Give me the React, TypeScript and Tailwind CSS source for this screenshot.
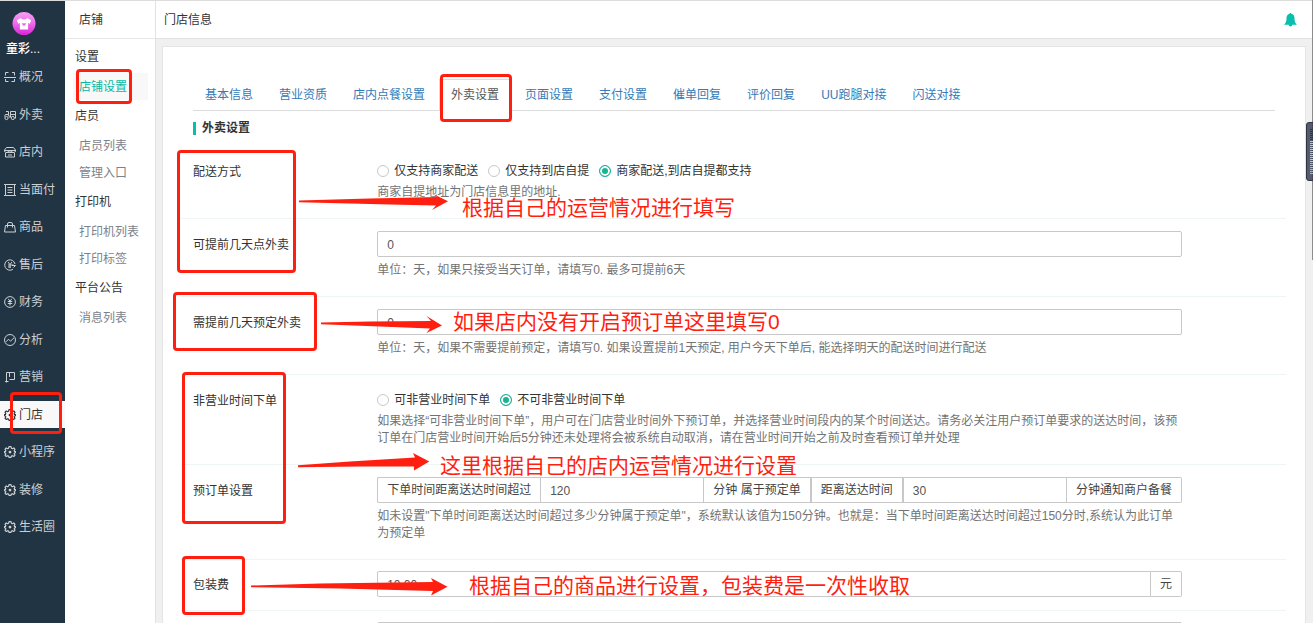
import type { ReactNode } from "react";

const stroke = {
  width: 12,
  height: 12,
  viewBox: "0 0 12 12",
  fill: "none",
  stroke: "currentColor",
  strokeWidth: 1,
  "aria-hidden": true,
} as const;

function Gear() {
  return (
    <svg {...stroke} strokeWidth={1.2}>
      <path
        strokeLinejoin="round"
        d="M5 .7h2l.4 1.500 1 .5 1.400-.8 1.200 1.400-.8 1.300.3.9 1 .2v1l-1 .3-.3.9.8 1.300L9.700 10.500l-1.300-.8-1 .4L7 11.400H5l-.4-1.300-1-.4-1.300.8L1 9.200l.8-1.300-.3-.9-1-.3v-1l1-.2.3-.9L1 3.300l1.200-1.400 1.400.8 1-.5z"
      />
      <circle cx="6" cy="6.100" r="1.400" fill="currentColor" stroke="none" />
    </svg>
  );
}

function Frame() {
  return (
    <svg {...stroke}>
      <path d="M4.500 1.500h-3v3M8 1.500h2.500v3M4.500 10.500h-3v-2.500M7.500 10.500h3v-2.500M0 6.500h12" />
    </svg>
  );
}

function Scooter() {
  return (
    <svg {...stroke}>
      <path d="M2 2.500h2.500v4M.5 7.500l1-2h3l1 3M6.500 8.500v-6h5v7M6.500 5.500h5" />
      <circle cx="2.500" cy="9" r="1.600" />
      <circle cx="8.800" cy="9" r="1.600" />
    </svg>
  );
}

function Store() {
  return (
    <svg {...stroke}>
      <path d="M2.500 1.500h7l2 2.500v1.500l-1.500 1h-8l-1.500-1V4zM.5 4.500h11M1.500 7v4h9V7M3.500 6.500l1-1.500 1.500 1.500 1.500-1.500 1 1.500M4 9h4" />
    </svg>
  );
}

function Bill() {
  return (
    <svg {...stroke}>
      <path d="M1.500.5h9v11h-9zM3.500 3.500h5M3.500 6h5M3.500 8.500h5M0 .5h1.500M0 11.500h1.500M10.500 .5H12M10.500 11.500H12" />
    </svg>
  );
}

function Bag() {
  return (
    <svg {...stroke}>
      <path d="M1.500 4.500h9l1 6.500H.5zM3.500 6.500V3a1.500 1.500 0 0 1 1.500-1.500h2A1.500 1.500 0 0 1 8.500 3v3.500" />
    </svg>
  );
}

function Service() {
  return (
    <svg {...stroke}>
      <path d="M9 10.200A5.200 5.200 0 1 1 11 5M4 3l2 2.500L8 3M6 5.500V9M4 6h5.500M4 8h3M8 6.500l3.500 0-2 2" />
    </svg>
  );
}

function Yuan() {
  return (
    <svg {...stroke}>
      <circle cx="6" cy="6" r="5.400" />
      <path d="M4.200 2.800L6 5.200l1.800-2.400M6 5v4.500M3.800 5.500h4.400M3.800 7.500h4.400" />
    </svg>
  );
}

function Trend() {
  return (
    <svg {...stroke}>
      <circle cx="6" cy="6" r="5.500" />
      <path d="M2 7.800L4.500 5.200l2 2L10 3.800" />
    </svg>
  );
}

function Flag() {
  return (
    <svg {...stroke}>
      <path d="M2.500 11.500V1.500h8v7h-5M1 10.500h3.500M5.500 1.500v4.500" />
    </svg>
  );
}

const mainMenu: { text: string; icon: ReactNode; active?: boolean }[] = [
  { text: "概况", icon: <Frame /> },
  { text: "外卖", icon: <Scooter /> },
  { text: "店内", icon: <Store /> },
  { text: "当面付", icon: <Bill /> },
  { text: "商品", icon: <Bag /> },
  { text: "售后", icon: <Service /> },
  { text: "财务", icon: <Yuan /> },
  { text: "分析", icon: <Trend /> },
  { text: "营销", icon: <Flag /> },
  { text: "门店", icon: <Gear />, active: true },
  { text: "小程序", icon: <Gear /> },
  { text: "装修", icon: <Gear /> },
  { text: "生活圈", icon: <Gear /> },
];

const subMenu = [
  { title: "设置", items: ["店铺设置"] },
  { title: "店员", items: ["店员列表", "管理入口"] },
  { title: "打印机", items: ["打印机列表", "打印标签"] },
  { title: "平台公告", items: ["消息列表"] },
];

const tabs = [
  "基本信息",
  "营业资质",
  "店内点餐设置",
  "外卖设置",
  "页面设置",
  "支付设置",
  "催单回复",
  "评价回复",
  "UU跑腿对接",
  "闪送对接",
];

function Row({
  label,
  htmlFor,
  divided = true,
  compact = false,
  children,
}: {
  label: string;
  htmlFor?: string;
  divided?: boolean;
  compact?: boolean;
  children: ReactNode;
}) {
  return (
    <div
      className={`grid grid-cols-12 ${divided ? "border-t border-[#eff4f5]" : ""} ${
        compact ? "py-[11px]" : "pt-3 pb-[17px]"
      }`}
    >
      {htmlFor ? (
        <label htmlFor={htmlFor} className="col-span-2 px-3 leading-[28px] whitespace-nowrap">
          {label}
        </label>
      ) : (
        <span className="col-span-2 px-3 leading-[28px] whitespace-nowrap">{label}</span>
      )}
      <div className="col-span-9 px-3">{children}</div>
    </div>
  );
}

function Radios({ name, options, selected }: { name: string; options: string[]; selected: number }) {
  return (
    <div role="radiogroup" aria-label={name} className="flex h-[26px] items-center gap-[10px]">
      {options.map((option, i) => (
        <label key={option} className="flex items-center gap-[5px]">
          <input
            type="radio"
            name={name}
            defaultChecked={i === selected}
            className="size-3 appearance-none rounded-full border border-[#c8c8c8] bg-white checked:border-[#1ab394] checked:bg-[#1ab394] checked:shadow-[inset_0_0_0_2px_#fff]"
          />
          {option}
        </label>
      ))}
    </div>
  );
}

function Help({ children }: { children: ReactNode }) {
  return <p className="leading-[17px] text-[#737373]">{children}</p>;
}

const inputClass = "h-[26px] border border-[#c8c8c8] bg-white px-[9px] pt-[2px] text-[#555] outline-none";
const addonClass =
  "flex h-[26px] shrink-0 items-center border border-[#c8c8c8] px-[9px] text-[#444] whitespace-nowrap";

const boxClass = "absolute rounded-[4px] border-3 border-[#ff1f10]";
const noteClass = "absolute text-[21px] leading-[26px] whitespace-nowrap text-[#ff1f10]";

function Annotations() {
  return (
    <div className="pointer-events-none absolute inset-0 overflow-hidden">
      <div className={`${boxClass} top-[392px] left-[10px] h-[42px] w-[52px]`} />
      <div className={`${boxClass} top-[69px] left-[76px] h-[35px] w-[56px]`} />
      <div className={`${boxClass} top-[74px] left-[440px] h-[48px] w-[72px]`} />
      <div className={`${boxClass} top-[150px] left-[177px] h-[123px] w-[119px]`} />
      <div className={`${boxClass} top-[292px] left-[173px] h-[59px] w-[144px]`} />
      <div className={`${boxClass} top-[372px] left-[182px] h-[152px] w-[104px]`} />
      <div className={`${boxClass} top-[556px] left-[182px] h-[59px] w-[63px]`} />
      <svg className="absolute top-0 left-0" width="480" height="623" fill="#ff1f10" aria-hidden="true">
        <path d="M299 200.500 370 198.500 437 197 432 193.500 448 201.300 432 210 436 205.500 390 204.500 299 202.200z" />
        <path d="M321 322.500 370 321.500 431 321 426.500 316 442 325.500 426.500 333 430 328.500 380 326.500 321 324.300z" />
        <path d="M298 465.300 350 461.500 415 457.500 413 453 429.300 461.500 414 470.500 414 466.500 360 466.500 298 467.200z" />
        <path d="M251 585.500 320 583.500 433 582 431 578 447.500 586.800 431 595.500 433 591 340 588.500 251 587.200z" />
      </svg>
      <p className={`${noteClass} top-[195px] left-[462px]`}>根据自己的运营情况进行填写</p>
      <p className={`${noteClass} top-[309px] left-[453px]`}>如果店内没有开启预订单这里填写0</p>
      <p className={`${noteClass} top-[453px] left-[440px]`}>这里根据自己的店内运营情况进行设置</p>
      <p className={`${noteClass} top-[573px] left-[469px]`}>根据自己的商品进行设置，包装费是一次性收取</p>
    </div>
  );
}

export default function App() {
  return (
    <div
      lang="zh-CN"
      className="relative flex h-screen flex-col overflow-hidden bg-[#f0f0f0] font-['Liberation_Sans','Noto_Sans_CJK_SC',sans-serif] text-xs text-[#333]"
    >
      <div className="flex min-h-0 flex-1 border-t border-[#dcdcdc]">
        <nav aria-label="主菜单" className="w-[65px] shrink-0 bg-[#213443] text-[#cdd0d2]">
          <div className="flex h-[62px] flex-col items-start pt-[11px]">
            <svg className="ml-3" width="24" height="24" viewBox="0 0 24 24" aria-hidden="true">
              <defs>
                <linearGradient id="logo" x1="0" y1="0" x2="0" y2="1">
                  <stop offset="0" stopColor="#f7a0f5" />
                  <stop offset=".5" stopColor="#ee6cea" />
                  <stop offset="1" stopColor="#dd22d8" />
                </linearGradient>
              </defs>
              <circle cx="12" cy="12" r="12" fill="url(#logo)" />
              <path
                d="M8.700 6.200c1.300 2.200 5.300 2.200 6.600 0l4.200 2.300-1.500 3.700-1.700-.6v6.600H7.700v-6.600l-1.700.6-1.500-3.700z"
                fill="#fff"
              />
              <path d="M12 14.800l-1.800-1.800c-.6-1.500 1.200-1.900 1.800-.7.600-1.200 2.400-.8 1.800.7z" fill="#ee6cea" />
            </svg>
            <span className="ml-[6px] leading-[28px] font-medium text-white">童彩...</span>
          </div>
          <ul className="flex h-[477px] flex-col justify-between">
            {mainMenu.map((item) => (
              <li key={item.text}>
                <a
                  href="#"
                  className={`flex h-[27px] items-center gap-[3px] pt-px pl-1 whitespace-nowrap ${
                    item.active ? "bg-[#f8f8f8] text-[#333]" : ""
                  }`}
                >
                  {item.icon}
                  {item.text}
                </a>
              </li>
            ))}
          </ul>
        </nav>

        <nav aria-label="店铺菜单" className="w-[91px] shrink-0 border-r border-[#e2e2e2] bg-white">
          <h2 className="h-[38px] border-b border-[#e8e8e8] pl-[14px] leading-[38px]">店铺</h2>
          <div className="flex flex-col gap-1 pt-[6px] pl-2">
            {subMenu.map((group) => (
              <section key={group.title}>
                <h3 className="mb-1 pl-[2px] leading-6">{group.title}</h3>
                <ul>
                  {group.items.map((item) => (
                    <li key={item}>
                      <a
                        href="#"
                        className={`mr-[7px] flex h-[27px] items-center pl-[6px] whitespace-nowrap ${
                          item === "店铺设置" ? "bg-[#f8f8f8] text-[#07b9a5]" : "text-[#7d828a]"
                        }`}
                      >
                        {item}
                      </a>
                    </li>
                  ))}
                </ul>
              </section>
            ))}
          </div>
        </nav>

        <div className="flex min-w-0 flex-1 flex-col">
          <header className="flex h-[38px] shrink-0 items-center justify-between border-b border-[#e2e2e2] bg-white pr-4 pl-2">
            <h1>门店信息</h1>
            <button type="button" aria-label="通知" className="text-[#08bfae]">
              <svg width="13" height="14" viewBox="0 0 13 14" fill="currentColor" aria-hidden="true">
                <path d="M5.800 0h1.400v.8c2.200.5 3.300 2.200 3.300 4.200 0 3.500.6 5 2.500 6.800H8.300c0 2.300-3.600 2.300-3.600 0H0C1.900 10 2.500 8.500 2.500 5c0-2 1.100-3.700 3.300-4.200z" />
              </svg>
            </button>
          </header>

          <main className="mt-[7px] mr-[7px] ml-[6px] flex-1 border border-[#e5e5e5] bg-white pt-8 pr-[19px] pl-[18px]">
            <nav aria-label="设置分类" className="mr-[11px] ml-3 flex gap-[2px] border-b border-[#ddd]">
              {tabs.map((tab) => (
                <a
                  key={tab}
                  href="#"
                  className={
                    tab === "外卖设置"
                      ? "-mb-px border border-b-0 border-[#ddd] bg-white px-[11px] leading-[30px] text-[#555]"
                      : "border border-b-0 border-transparent px-[11px] leading-[30px] text-[#337ab7]"
                  }
                >
                  {tab}
                </a>
              ))}
            </nav>
            <h2 className="mx-3 mt-[11px] mb-[11px] border-l-3 border-[#07bfae] pl-[6px] leading-[13px] font-bold">
              外卖设置
            </h2>

            <form>
              <Row label="配送方式" divided={false}>
                <Radios
                  name="配送方式"
                  options={["仅支持商家配送", "仅支持到店自提", "商家配送,到店自提都支持"]}
                  selected={2}
                />
                <Help>商家自提地址为门店信息里的地址.</Help>
              </Row>

              <Row label="可提前几天点外卖" htmlFor="advance">
                <input id="advance" defaultValue="0" className={`${inputClass} mb-[5px] block w-full rounded-[2px]`} />
                <Help>单位：天，如果只接受当天订单，请填写0. 最多可提前6天</Help>
              </Row>

              <Row label="需提前几天预定外卖" htmlFor="reserve">
                <input id="reserve" defaultValue="0" className={`${inputClass} mb-[5px] block w-full rounded-[2px]`} />
                <Help>
                  单位：天，如果不需要提前预定，请填写0. 如果设置提前1天预定, 用户今天下单后,
                  能选择明天的配送时间进行配送
                </Help>
              </Row>

              <Row label="非营业时间下单">
                <Radios name="非营业时间下单" options={["可非营业时间下单", "不可非营业时间下单"]} selected={1} />
                <Help>
                  如果选择“可非营业时间下单”，用户可在门店营业时间外下预订单，并选择营业时间段内的某个时间送达。请务必关注用户预订单要求的送达时间，该预订单在门店营业时间开始后5分钟还未处理将会被系统自动取消，请在营业时间开始之前及时查看预订单并处理
                </Help>
              </Row>

              <Row label="预订单设置">
                <div className="mb-[5px] flex">
                  <label htmlFor="before" className={`${addonClass} rounded-l-[2px] border-r-0`}>
                    下单时间距离送达时间超过
                  </label>
                  <input id="before" defaultValue="120" className={`${inputClass} w-0 flex-1`} />
                  <span className={`${addonClass} border-l-0`}>分钟 属于预定单</span>
                  <label htmlFor="notify" className={addonClass}>
                    距离送达时间
                  </label>
                  <input id="notify" defaultValue="30" className={`${inputClass} w-0 flex-1`} />
                  <span className={`${addonClass} rounded-r-[2px] border-l-0`}>分钟通知商户备餐</span>
                </div>
                <Help>
                  如未设置"下单时间距离送达时间超过多少分钟属于预定单"，系统默认该值为150分钟。也就是：当下单时间距离送达时间超过150分时,系统认为此订单为预定单
                </Help>
              </Row>

              <Row label="包装费" htmlFor="pack" compact>
                <div className="flex">
                  <input id="pack" defaultValue="10.00" className={`${inputClass} w-0 flex-1 rounded-l-[2px]`} />
                  <span className={`${addonClass} rounded-r-[2px] border-l-0`}>元</span>
                </div>
              </Row>

              <Row label="" compact>
                <div className="flex">
                  <span className={`${addonClass} w-[116px] rounded-l-[2px]`} />
                  <input aria-label="配送费" className={`${inputClass} w-0 flex-1 rounded-r-[2px] border-l-0`} />
                </div>
              </Row>
            </form>
          </main>
        </div>
      </div>

      <div className="absolute top-0 right-0 h-[260px] w-px bg-[#8c8c8c]" />
      <svg className="absolute top-[122px] right-0" width="7" height="60" viewBox="0 0 7 60" aria-hidden="true">
        <path d="M7 .5H3a2.500 2.500 0 0 0-2.500 2.500v53a2.500 2.500 0 0 0 2.500 2.500h4z" fill="#555c6d" stroke="#2f3442" />
        <path d="M5.500 7v12" stroke="#2f3442" strokeWidth="3" strokeDasharray="1 1" />
        <path d="M5.500 19v9" stroke="#e6c465" strokeWidth="3" strokeDasharray="1 1" />
        <path d="M5.500 29v11" stroke="#b5d986" strokeWidth="3" strokeDasharray="1 1" />
        <path d="M5.500 41v12" stroke="#6fd6c4" strokeWidth="3" strokeDasharray="1 1" />
      </svg>

      <Annotations />
    </div>
  );
}
